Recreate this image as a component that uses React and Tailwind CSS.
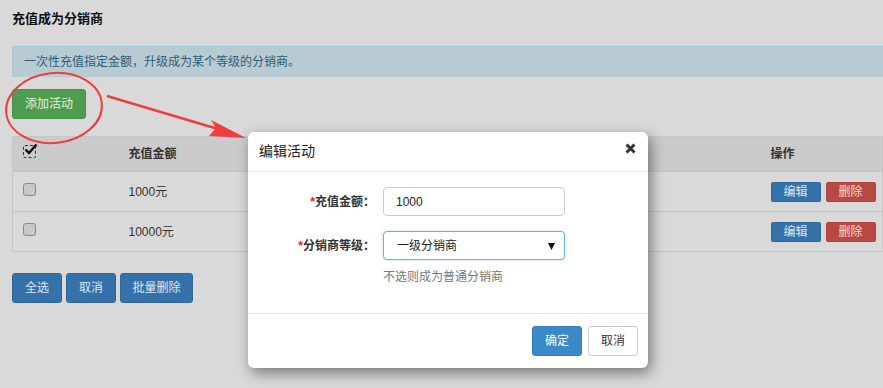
import { useState } from 'react';

const FONT = { fontFamily: '"Liberation Sans", "Noto Sans CJK SC", sans-serif' };

const rows = [
  { id: 1, amount: '1000元' },
  { id: 2, amount: '10000元' },
];

function Box({ checked }) {
  if (checked) {
    return (
      <span className="relative inline-block w-[13px] h-[13px] border border-dashed border-[#333] rounded-[2px] bg-[#cbcbcb]">
        <svg className="absolute -top-[3px] left-0" width="14" height="13" viewBox="0 0 14 13">
          <path d="M1.5 6.5 L5 10 L12.5 1.5" fill="none" stroke="#111" strokeWidth="2.4" />
        </svg>
      </span>
    );
  }
  return <span className="inline-block w-[13px] h-[13px] border border-[#8a8a8a] rounded-[3px] bg-[#c8c8c8]" />;
}

export default function App() {
  const [level, setLevel] = useState('一级分销商');

  return (
    <div className="relative w-[883px] h-[388px] overflow-hidden bg-[#d9d9d9] text-[12px] text-[#2b2b2b]" style={FONT}>
      <div className="pl-3 pt-[11px]">
        <h3 className="text-[13px] font-bold text-[#111] leading-[16px]">充值成为分销商</h3>

        <div className="mt-[19px] h-[31px] flex items-center pl-[11px] bg-[#b8cad2] border-t border-[#9ccad3] border-l border-l-[#a9c7cf] text-[#2b5f77]">
          一次性充值指定金额，升级成为某个等级的分销商。
        </div>

        <button className="mt-[12px] w-[74px] h-[30px] rounded-[3px] bg-[#4e9d4e] border border-[#46904a] text-[#e4eee4] text-[12px]">
          添加活动
        </button>

        <table className="mt-[17px] w-full border-collapse border border-[#c6c6c6]">
          <thead>
            <tr className="bg-[#cbcbcb] h-[35px]">
              <th className="w-[105px] pl-[10px] text-left font-normal"><Box checked /></th>
              <th className="text-left font-bold text-[#333] pl-[11px]">充值金额</th>
              <th className="w-[112px] text-left font-bold text-[#333]">操作</th>
            </tr>
          </thead>
          <tbody>
            {rows.map((row) => (
              <tr key={row.id} className="h-[40px] border-t border-[#c4c4c4]">
                <td className="pl-[10px]"><Box /></td>
                <td className="pl-[11px] text-[#333]">{row.amount}</td>
                <td>
                  <div className="flex gap-[5px]">
                    <button className="w-[50px] h-[20px] rounded-[2px] bg-[#3572aa] border border-[#2f679b] text-[#dce6ef] text-[12px] leading-none">编辑</button>
                    <button className="w-[50px] h-[20px] rounded-[2px] bg-[#b84843] border border-[#aa403c] text-[#f0dede] text-[12px] leading-none">删除</button>
                  </div>
                </td>
              </tr>
            ))}
          </tbody>
        </table>

        <div className="mt-[21px] flex gap-[4px]">
          <button className="w-[50px] h-[30px] rounded-[3px] bg-[#3572aa] border border-[#2f679b] text-[#dce6ef] text-[12px]">全选</button>
          <button className="w-[50px] h-[30px] rounded-[3px] bg-[#3572aa] border border-[#2f679b] text-[#dce6ef] text-[12px]">取消</button>
          <button className="w-[73px] h-[30px] rounded-[3px] bg-[#3572aa] border border-[#2f679b] text-[#dce6ef] text-[12px]">批量删除</button>
        </div>
      </div>

      {/* annotation: circle and arrow */}
      <svg className="absolute left-0 top-0 pointer-events-none" width="260" height="160" viewBox="0 0 260 160">
        <ellipse cx="54" cy="108" rx="48" ry="35" fill="none" stroke="#f03c3c" strokeWidth="2" transform="rotate(-6 54 108)" />
        <path d="M107 96 L218 129" stroke="#f03c3c" strokeWidth="2.5" />
        <path d="M246 138 L211 120 L216 128 L209 136 Z" fill="#f03c3c" />
      </svg>

      {/* modal */}
      <div className="absolute left-[248px] top-[132px] w-[400px] h-[236px] bg-white rounded-[6px] shadow-[3px_5px_14px_rgba(0,0,0,0.45)] flex flex-col">
        <div className="h-[40px] flex items-center justify-between pl-[11px] pr-[12px] border-b border-[#e5e5e5]">
          <span className="text-[14px] text-[#222]">编辑活动</span>
          <svg width="11" height="11" viewBox="0 0 11 11" className="-mt-[7px]">
            <path d="M1.5 1.5 L9.5 9.5 M9.5 1.5 L1.5 9.5" stroke="#333" strokeWidth="3" />
          </svg>
        </div>

        <div className="flex-1 pt-[15px] border-b border-[#e5e5e5]">
          <div className="flex items-center">
            <label className="w-[127px] text-right font-bold text-[#333] text-[12px]">
              <span className="text-[#e02020]">*</span>充值金额：
            </label>
            <input
              defaultValue="1000"
              className="ml-[8px] w-[182px] h-[29px] px-[12px] border border-[#ccc] rounded-[4px] text-[12px] text-[#222] outline-none"
              style={FONT}
            />
          </div>
          <div className="flex items-center mt-[15px]">
            <label className="w-[127px] text-right font-bold text-[#333] text-[12px]">
              <span className="text-[#e02020]">*</span>分销商等级：
            </label>
            <div className="relative ml-[8px] w-[182px] h-[29px] border border-[#66afe9] rounded-[4px] shadow-[0_0_3px_rgba(102,175,233,0.5)] flex items-center pl-[13px] text-[12px] text-[#222]">
              <span>{level}</span>
              <svg className="absolute right-[9px] top-[11px]" width="7" height="7" viewBox="0 0 7 7">
                <path d="M0 0 H7 L3.5 7 Z" fill="#111" />
              </svg>
              <select
                value={level}
                onChange={(e) => setLevel(e.target.value)}
                className="absolute inset-0 opacity-0"
              >
                <option>一级分销商</option>
                <option>二级分销商</option>
              </select>
            </div>
          </div>
          <p className="ml-[135px] mt-[8px] text-[12px] text-[#777]">不选则成为普通分销商</p>
        </div>

        <div className="h-[54px] flex items-center justify-end gap-[6px] pr-[10px]">
          <button className="w-[50px] h-[30px] rounded-[3px] bg-[#3c88c8] border border-[#357ebd] text-white text-[12px]">确定</button>
          <button className="w-[50px] h-[30px] rounded-[3px] bg-white border border-[#ccc] text-[#333] text-[12px]">取消</button>
        </div>
      </div>
    </div>
  );
}
